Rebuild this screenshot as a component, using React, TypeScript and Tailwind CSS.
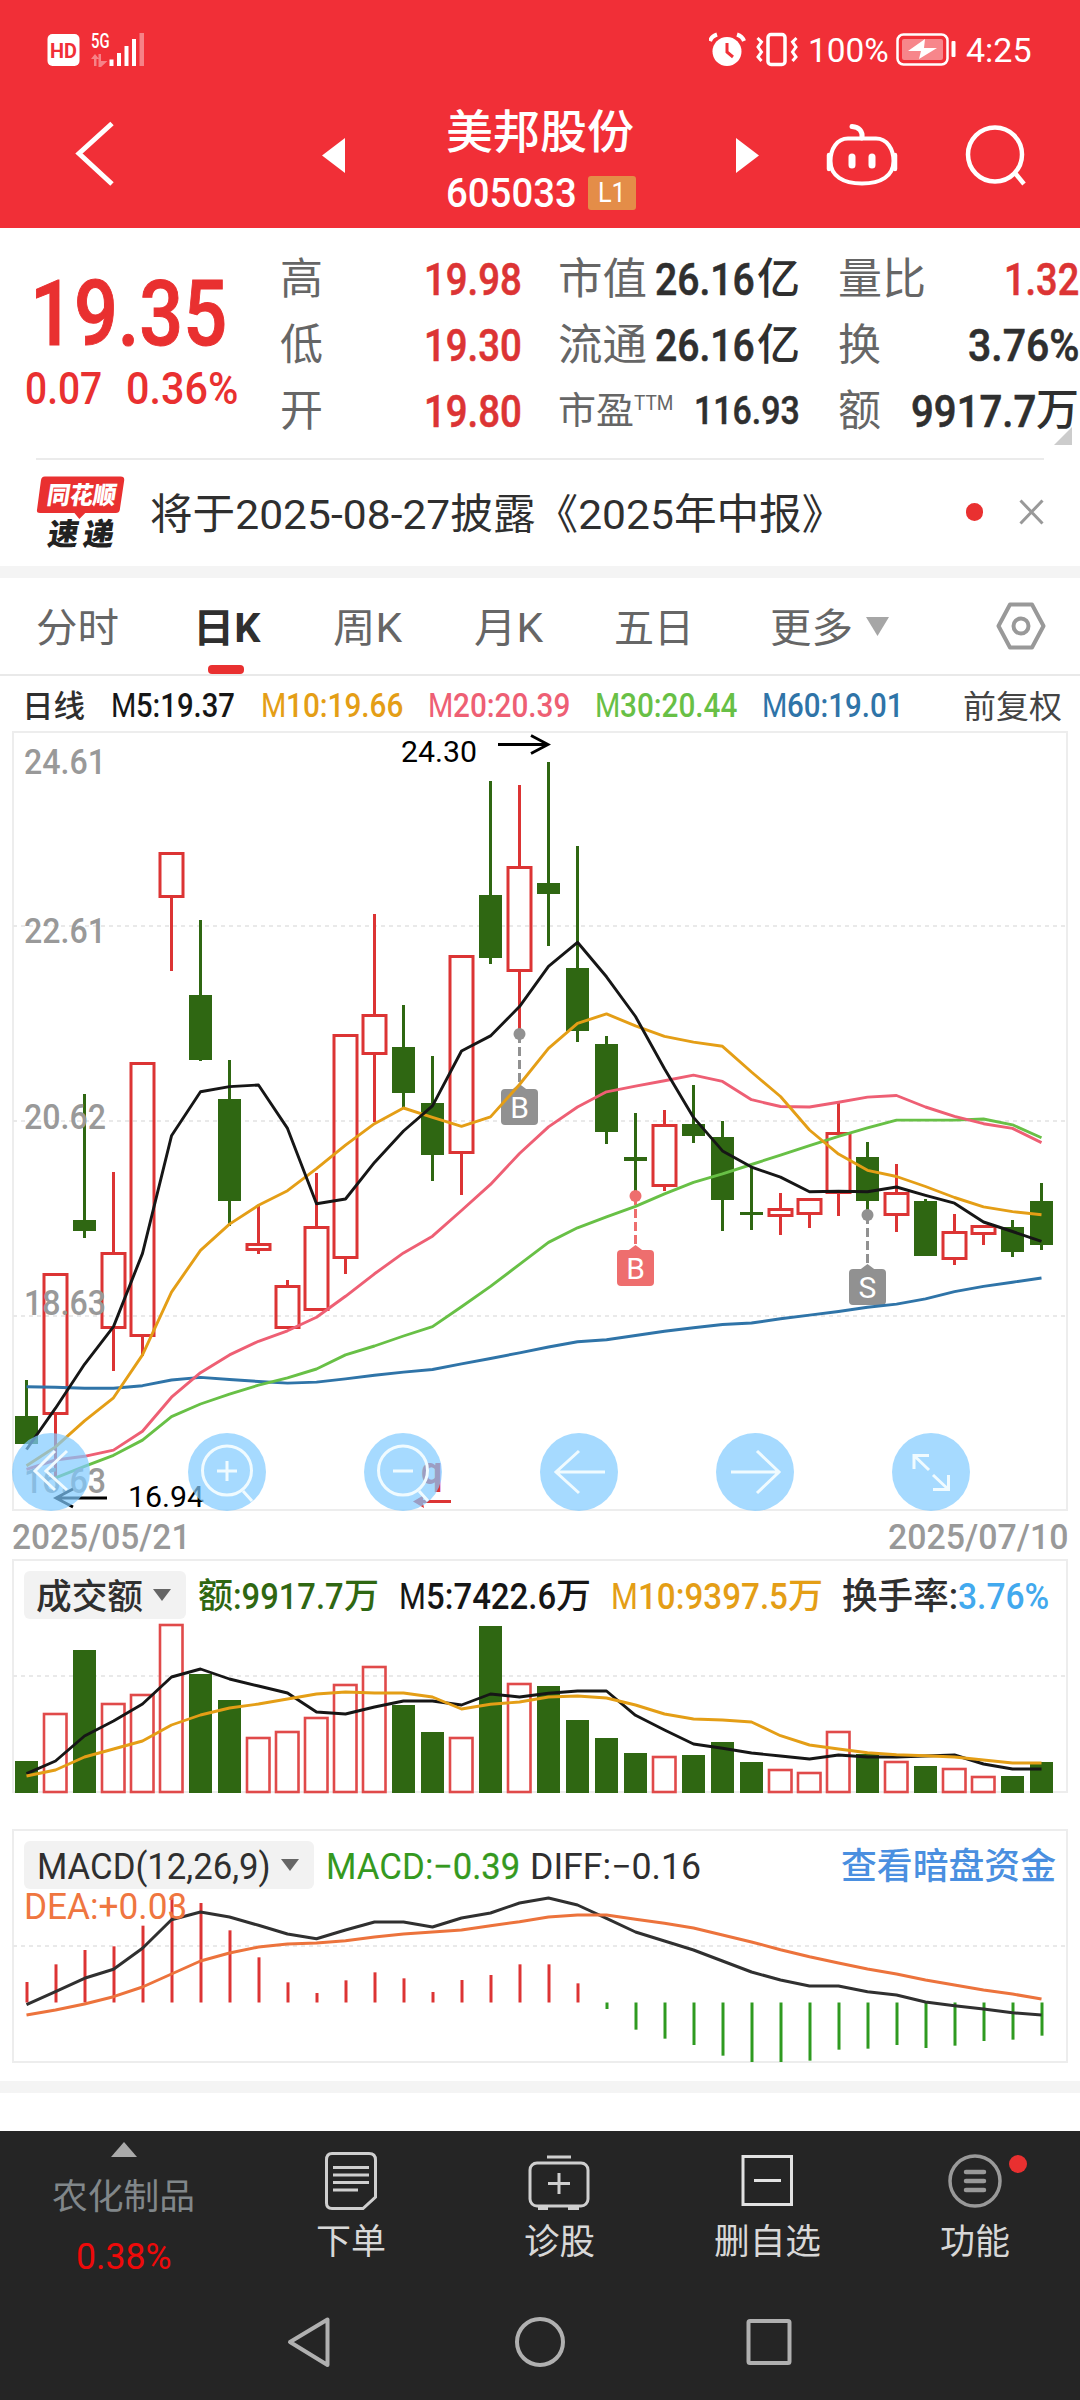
import React, { useLayoutEffect, useRef, useState } from 'react';

/** Single-line text condensed or widened to an exact width. */
function T({ w, dy = 1.5, className = '', children }: { w: number; dy?: number; className?: string; children: React.ReactNode }) {
  const ref = useRef<HTMLSpanElement>(null);
  const [s, setS] = useState(1);
  useLayoutEffect(() => {
    if (ref.current) setS(w / ref.current.offsetWidth);
  }, [w]);
  return (
    <span className={'block shrink-0 leading-none whitespace-nowrap ' + className} style={{ width: w }}>
      <span ref={ref} className="inline-block origin-left" style={{ transform: `translateY(${dy}px) scaleX(${s})` }}>
        {children}
      </span>
    </span>
  );
}

const RED = '#dc3434';
const GREEN = '#2f6712';
const FRAME = '#ededed';
const X0 = 26.5;
const STEP = 29;
const cx = (i: number) => X0 + STEP * i;

const line = (vals: number[], k: number, base: number, start = 0) =>
  vals.map((v, i) => `${cx(i + start)},${(base + v * k).toFixed(1)}`).join(' ');

type Candle = [up: number, high: number, top: number, bottom: number, low: number];
const candles: Candle[] = [
  [0, 1380, 1416, 1444, 1444], [1, 1273, 1273, 1415, 1477], [0, 1094, 1220, 1231, 1238], [1, 1172, 1252, 1329, 1371],
  [1, 1062, 1062, 1337, 1356], [1, 852, 852, 898, 971], [0, 920, 995, 1060, 1061], [0, 1060, 1099, 1201, 1226],
  [1, 1206, 1243, 1251, 1254], [1, 1280, 1285, 1329, 1329], [1, 1173, 1226, 1311, 1311], [1, 1034, 1034, 1259, 1274],
  [1, 914, 1014, 1055, 1122], [0, 1005, 1047, 1093, 1108], [0, 1056, 1103, 1155, 1181], [1, 955, 955, 1154, 1195],
  [0, 781, 895, 958, 964], [1, 785, 866, 972, 1033], [0, 762, 883, 894, 946], [0, 846, 968, 1031, 1042],
  [0, 1036, 1044, 1132, 1144], [0, 1113, 1157, 1161, 1195], [1, 1110, 1124, 1187, 1191], [0, 1085, 1124, 1136, 1143],
  [0, 1121, 1137, 1200, 1231], [0, 1167, 1212, 1215, 1230], [1, 1193, 1208, 1217, 1235], [1, 1198, 1198, 1215, 1228],
  [1, 1103, 1132, 1194, 1216], [0, 1142, 1157, 1201, 1216], [1, 1164, 1192, 1216, 1232], [0, 1199, 1201, 1256, 1256],
  [1, 1214, 1231, 1260, 1265], [1, 1225, 1225, 1235, 1245], [0, 1220, 1227, 1252, 1257], [0, 1183, 1201, 1245, 1250],
];

const ma5 = [1395, 1316, 1232, 1160, 1020, 795, 711, 701, 698, 781, 925, 916, 846, 786, 738, 633, 604, 548, 471, 425, 491, 567, 667, 760, 824, 855, 874, 902, 901, 902, 893, 909, 924, 960, 978, 997];
const ma10 = [1426, 1390, 1340, 1296, 1214, 1094, 1014, 964, 928, 900, 858, 813, 772, 742, 760, 777, 759, 697, 628, 580, 562, 585, 605, 616, 624, 673, 720, 784, 830, 861, 873, 892, 913, 931, 940, 946];
const ma20 = [1433, 1415, 1408, 1396, 1360, 1295, 1248, 1214, 1188, 1168, 1142, 1102, 1059, 1019, 987, 938, 888, 829, 778, 740, 711, 700, 690, 679, 691, 726, 739, 740, 731, 721, 718, 740, 758, 772, 781, 808];
const ma30 = [1449, 1427, 1406, 1377, 1332, 1308, 1289, 1272, 1258, 1241, 1214, 1197, 1178, 1160, 1122, 1083, 1041, 999, 971, 950, 930, 906, 884, 868, 850, 832, 814, 796, 780, 765, 765, 765, 763, 774, 799];
const ma60 = [1275, 1276, 1278, 1278, 1273, 1262, 1257, 1261, 1265, 1268, 1266, 1260, 1253, 1247, 1242, 1231, 1221, 1210, 1199, 1189, 1185, 1177, 1169, 1162, 1156, 1153, 1145, 1138, 1131, 1123, 1117, 1107, 1093, 1083, 1075, 1067];

const volume = [633, 489, 300, 459, 432, 222, 372, 450, 561, 543, 501, 402, 348, 465, 546, 561, 228, 399, 408, 510, 564, 609, 618, 615, 576, 636, 657, 666, 543, 612, 633, 648, 654, 678, 678, 636];
const vol5 = [671, 633, 558, 513, 462, 381, 357, 387, 408, 429, 486, 492, 471, 453, 453, 465, 432, 441, 430, 423, 423, 496, 540, 582, 595, 609, 618, 627, 615, 621, 621, 618, 615, 642, 657, 657];
const vol10 = [678, 660, 621, 597, 573, 525, 495, 474, 462, 447, 432, 426, 429, 429, 441, 477, 463, 456, 441, 438, 444, 465, 492, 507, 510, 516, 557, 585, 597, 608, 614, 617, 621, 630, 639, 639];

const macd = [516, 463, 420, 409, 347, 262, 279, 361, 442, 517, 549, 511, 487, 505, 546, 510, 495, 463, 463, 520, 597, 659, 686, 705, 737, 756, 756, 752, 719, 716, 705, 714, 707, 693, 689, 677];
const diff = [584, 545, 505, 478, 415, 329, 306, 321, 346, 372, 386, 360, 336, 336, 351, 324, 309, 279, 264, 285, 325, 366, 393, 420, 453, 486, 510, 528, 528, 545, 555, 576, 587, 597, 608, 615];
const dea = [615, 600, 582, 560, 531, 492, 453, 429, 411, 402, 399, 392, 381, 372, 366, 360, 347, 335, 321, 315, 315, 328, 340, 354, 375, 396, 419, 440, 459, 477, 492, 510, 525, 540, 552, 567];

const PK = 820 / 1568;

function Mark({ x, y, box, label, color }: { x: number; y: number; box: number; label: string; color: string }) {
  return (
    <g fill={color}>
      <line x1={x} x2={x} y1={y} y2={box - 4} stroke={color} strokeWidth="3" strokeDasharray="9 4" />
      <circle cx={x} cy={y} r="6" />
      <path d={`M${x - 8} ${box + 1}L${x} ${box - 5}L${x + 8} ${box + 1}Z`} />
      <rect x={x - 18.5} y={box} width="37" height="36" rx="4" />
      <text x={x} y={box + 28.5} textAnchor="middle" fontSize="30" fill="#fff">{label}</text>
    </g>
  );
}

function PriceChart() {
  return (
    <svg className="block" width="1080" height="788" viewBox="0 728 1080 788" fontFamily="Roboto, sans-serif">
      <rect x="13" y="732" width="1054" height="778" fill="none" stroke={FRAME} strokeWidth="2" />
      {[926, 1121, 1316].map((y) => (
        <line key={y} x1="13" x2="1067" y1={y} y2={y} stroke="#e9e9e9" strokeWidth="2" strokeDasharray="4 4" />
      ))}
      {candles.map(([up, h, t, b, l], i) =>
        up ? (
          <g key={i} stroke={RED} strokeWidth="3" fill="none">
            {h < t && <line x1={cx(i)} x2={cx(i)} y1={h} y2={t} />}
            {l > b && <line x1={cx(i)} x2={cx(i)} y1={b} y2={l} />}
            <rect x={cx(i) - 11.5} y={t + 1.5} width="23" height={b - t - 3} />
          </g>
        ) : (
          <g key={i} fill={GREEN}>
            <rect x={cx(i) - 1.5} y={h} width="3" height={l - h} />
            <rect x={cx(i) - 11.5} y={t} width="23" height={b - t} />
          </g>
        ),
      )}
      <Mark x={519.5} y={1034} box={1089} label="B" color="#919191" />
      <Mark x={635.5} y={1196} box={1250} label="B" color="#ee6e6e" />
      <Mark x={867.5} y={1215} box={1269} label="S" color="#919191" />
      <g fill="none" strokeWidth="2.9" strokeLinejoin="round">
        <polyline points={line(ma60, PK, 720)} stroke="#2f74a8" />
        <polyline points={line(ma30, PK, 720, 1)} stroke="#68c046" />
        <polyline points={line(ma20, PK, 720)} stroke="#ee5f74" />
        <polyline points={line(ma10, PK, 720)} stroke="#e49e16" />
        <polyline points={line(ma5, PK, 720)} stroke="#161616" />
      </g>
      <g fill="#999" fontSize="35" fontWeight="500">
        {([['24.61', 774], ['22.61', 943], ['20.62', 1129], ['18.63', 1315], ['16.63', 1493]] as [string, number][]).map(([s, y]) => (
          <text key={s} x="24" y={y} textLength="82" lengthAdjust="spacingAndGlyphs">{s}</text>
        ))}
      </g>
      <g fontSize="30" fill="#000">
        <text x="401" y="762" textLength="76" lengthAdjust="spacingAndGlyphs">24.30</text>
        <text x="128" y="1507" textLength="76" lengthAdjust="spacingAndGlyphs">16.94</text>
      </g>
      <g stroke="#000" strokeWidth="2.800" fill="none">
        <path d="M498 744.5H548M531 735.5L548 744.5L531 753.5" />
        <path d="M107 1498H56M73 1489L56 1498L73 1507" />
      </g>
      <g fill={RED}>
        <text x="421" y="1484" fontSize="38" fontWeight="700">q</text>
        <path d="M451 1500V1503H423L424 1508L413 1501.500L424 1495L423 1500Z" />
      </g>
      <g fill="#80caff" fillOpacity="0.7">
        {[51, 227, 403, 579, 755, 931].map((x) => (
          <circle key={x} cx={x} cy="1472" r="39" />
        ))}
      </g>
      <g stroke="#f0fbff" strokeWidth="3" fill="none">
        <path d="M67 1451L46 1471L67 1490M55 1451L35 1471L55 1490" />
        <circle cx="227" cy="1470.500" r="24.500" />
        <path d="M217 1471H237M227 1461V1481M243 1491L252 1501" />
        <circle cx="403" cy="1470.500" r="24.500" />
        <path d="M393 1471H413M419 1491L428 1501" />
        <path d="M605 1472H556M579 1451L556 1472L579 1493" />
        <path d="M731 1472H779M757 1451L779 1472L757 1493" />
        <path d="M929 1455.500H914V1469M914 1455.500L929 1470M933 1475L948.500 1489.500M933 1489.500H948.500V1475" />
      </g>
    </svg>
  );
}

function VolumeChart() {
  return (
    <svg className="block" width="1080" height="240" viewBox="0 1556 1080 240">
      <rect x="13" y="1560" width="1054" height="232" fill="none" stroke={FRAME} strokeWidth="2" />
      <line x1="13" x2="1067" y1="1676" y2="1676" stroke="#e9e9e9" strokeWidth="2" strokeDasharray="4 4" />
      {volume.map((v, i) => {
        const y = 1550 + v / 3;
        return candles[i][0] ? (
          <rect key={i} x={cx(i) - 11.5} y={y + 1} width="22.500" height={1792 - y - 1} fill="none" stroke="#e04a4a" strokeWidth="2.600" />
        ) : (
          <rect key={i} x={cx(i) - 11.5} y={y} width="23" height={1793 - y} fill={GREEN} />
        );
      })}
      <g fill="none" strokeWidth="2.900" strokeLinejoin="round">
        <polyline points={line(vol5, 1 / 3, 1550)} stroke="#161616" />
        <polyline points={line(vol10, 1 / 3, 1550)} stroke="#e49e16" />
      </g>
    </svg>
  );
}

function MacdChart() {
  return (
    <svg className="block" width="1080" height="240" viewBox="0 1826 1080 240">
      <rect x="13" y="1830" width="1054" height="232" fill="none" stroke={FRAME} strokeWidth="2" />
      <line x1="13" x2="1067" y1="1946" y2="1946" stroke="#e9e9e9" strokeWidth="2" strokeDasharray="4 4" />
      {macd.map((v, i) => (
        <line key={i} x1={cx(i) + 0.5} x2={cx(i) + 0.5} y1="2002.500" y2={1810 + v / 3} stroke={v < 577 ? '#dc3434' : '#2f9a20'} strokeWidth="3" />
      ))}
      <g fill="none" strokeWidth="3" strokeLinejoin="round">
        <polyline points={line(diff, 1 / 3, 1810)} stroke="#303030" />
        <polyline points={line(dea, 1 / 3, 1810)} stroke="#ec733c" />
      </g>
    </svg>
  );
}

function Header() {
  return (
    <header className="h-[228px] bg-[#f12f37] text-white">
      <div className="flex h-[100px] items-center pl-[47px] pr-[48px]">
        <svg width="100" height="44" viewBox="47 28 100 44" fill="#fff">
          <rect x="47.500" y="34" width="32" height="32" rx="5" />
          <text x="50" y="58" fontSize="21" fontWeight="700" fill="#f12f37" textLength="27" lengthAdjust="spacingAndGlyphs">HD</text>
          <text x="91" y="47.500" fontSize="20" fontWeight="500" textLength="18.500" lengthAdjust="spacingAndGlyphs">5G</text>
          <g opacity="0.4">
            <path d="M91 59L95 54L99 59H96.500V66H94V59ZM98.500 54H101V61H103.500L107.500 61L101 67H98.500Z" />
            <rect x="139.500" y="33" width="4.500" height="33" />
          </g>
          <rect x="109.500" y="59.500" width="4" height="6.500" />
          <rect x="117" y="53" width="4" height="13" />
          <rect x="124.500" y="46" width="4" height="20" />
          <rect x="132" y="39" width="4" height="27" />
        </svg>
        <svg className="ml-auto" width="92" height="36" viewBox="710 32 92 36" fill="none" stroke="#fff">
          <circle cx="728" cy="51.500" r="14.500" fill="#fff" stroke="none" />
          <path d="M711 41C712 38 715 35.500 718 34.500M745 41C744 38 741 35.500 738 34.500" strokeWidth="4" />
          <path d="M728 43V52L734 57" stroke="#f12f37" strokeWidth="3" />
          <rect x="769" y="34.500" width="17" height="30" rx="3" strokeWidth="3.500" />
          <path d="M758.500 38L762.500 42L759 47L762.500 52L759 57L762.500 61M797.500 38L793.500 42L797 47L793.500 52L797 57L793.500 61" strokeWidth="3" />
        </svg>
        <T w={81} dy={0} className="ml-[7px] text-[33px]">100%</T>
        <svg className="ml-[6px]" width="62" height="36" viewBox="895 32 62 36">
          <rect x="897.500" y="34.500" width="50" height="30" rx="6" fill="none" stroke="#fff" strokeWidth="2.500" />
          <rect x="902" y="39" width="41" height="21" rx="2" fill="#fff" opacity="0.42" />
          <rect x="951.500" y="41" width="4" height="16" rx="1" fill="#fff" />
          <path d="M925 39L908 51H921L919 59L937 48H924Z" fill="#fff" />
        </svg>
        <T w={66} dy={0} className="ml-[9px] text-[34px]">4:25</T>
      </div>
      <div className="flex h-[128px] items-start pl-[74px]">
        <svg className="mt-[20px]" width="42" height="68" viewBox="74 120 42 68" fill="none" stroke="#fff" strokeWidth="5">
          <path d="M112 123.500L79 153.500L112 184" />
        </svg>
        <svg className="ml-[206px] mt-[38px]" width="23" height="35" fill="#fff"><path d="M0 17.500L23 0V35Z" /></svg>
        <div className="ml-[101px] flex w-[192px] flex-col">
          <T w={188} className="mt-[7px] text-[46px] font-medium">美邦股份</T>
          <div className="mt-[19px] flex items-center">
            <T w={131} dy={0.5} className="text-[41px] font-medium">605033</T>
            <div className="ml-[11px] flex h-[34px] w-[48px] items-center justify-center rounded-[3px] bg-[#e48d48]">
              <T w={28} dy={0} className="text-[28px]">L1</T>
            </div>
          </div>
        </div>
        <svg className="ml-[98px] mt-[38px]" width="23" height="35" fill="#fff"><path d="M23 17.500L0 0V35Z" /></svg>
        <svg className="ml-[66px] mt-[20px]" width="74" height="68" viewBox="824 120 74 68" fill="none" stroke="#fff" strokeWidth="4">
          <path d="M847 138.500H875C886 138.500 892.500 149 892.500 161C892.500 176 880 183.500 861 183.500C842 183.500 829.500 176 829.500 161C829.500 149 836 138.500 847 138.500Z" />
          <path d="M861 138C862 131 858 127 851 126.500" strokeWidth="5" strokeLinecap="round" />
          <path d="M828 155V169M894 155V169" strokeWidth="4.500" strokeLinecap="round" />
          <path d="M851 157V165M871 157V165" strokeWidth="7" strokeLinecap="round" />
        </svg>
        <svg className="ml-[66px] mt-[22px]" width="66" height="68" viewBox="964 122 66 68" fill="none" stroke="#fff" strokeWidth="4.500">
          <circle cx="994" cy="154.500" r="27" />
          <path d="M1014 173L1023 184" />
        </svg>
      </div>
    </header>
  );
}

const numRed = 'text-[45px] font-medium text-[#dc3434] [-webkit-text-stroke:0.6px]';
const numDark = 'text-[45px] font-medium text-[#2f2f2f] [-webkit-text-stroke:0.6px]';
const lab = 'text-[43px] text-[#666]';

function Quote() {
  return (
    <section className="flex h-[230px] pt-[16px]">
      <div className="w-[280px] text-[#e93030]">
        <T w={197} className="ml-[30px] mt-[23px] text-[91px] font-medium [-webkit-text-stroke:1px]">19.35</T>
        <div className="mt-[6px] flex">
          <T w={77} className="ml-[25px] text-[45px] font-medium">0.07</T>
          <T w={112} className="ml-[24px] text-[45px] font-medium">0.36%</T>
        </div>
      </div>
      <div className="flex w-[242px] flex-col">
        {[['高', '19.98'], ['低', '19.30'], ['开', '19.80']].map(([k, v]) => (
          <div key={k} className="flex h-[66px] items-center justify-between">
            <T w={43} className={lab}>{k}</T>
            <T w={98} className={numRed}>{v}</T>
          </div>
        ))}
      </div>
      <div className="ml-[36px] flex w-[242px] flex-col">
        {['市值', '流通'].map((k) => (
          <div key={k} className="flex h-[66px] items-center">
            <T w={89} className={lab}>{k}</T>
            <T w={100} className={'ml-[8px] ' + numDark}>26.16</T>
            <T w={43} className="ml-[2px] text-[43px] font-medium text-[#2f2f2f]">亿</T>
          </div>
        ))}
        <div className="flex h-[66px] items-center">
          <T w={76} className="text-[37px] text-[#666]">市盈</T>
          <T w={39} className="-mt-[17px] text-[20px] text-[#666]">TTM</T>
          <T w={106} className="ml-[21px] text-[39px] font-medium text-[#2f2f2f] [-webkit-text-stroke:0.5px]">116.93</T>
        </div>
      </div>
      <div className="relative ml-[38px] flex w-[241px] flex-col">
        <div className="flex h-[66px] items-center justify-between">
          <T w={88} className={lab}>量比</T>
          <T w={75} className={numRed}>1.32</T>
        </div>
        <div className="flex h-[66px] items-center justify-between">
          <T w={43} className={lab}>换</T>
          <T w={111} className={numDark}>3.76%</T>
        </div>
        <div className="flex h-[66px] items-center justify-between">
          <T w={43} className={lab}>额</T>
          <div className="flex">
            <T w={125} className={numDark}>9917.7</T>
            <T w={43} className="text-[43px] font-medium text-[#2f2f2f]">万</T>
          </div>
        </div>
        <svg className="absolute left-[216px] top-[183px]" width="18" height="18" fill="#ccc"><path d="M18 0V18H0Z" /></svg>
      </div>
    </section>
  );
}

function News() {
  return (
    <section className="mx-[36px] flex h-[108px] items-start border-t-2 border-[#ebebeb]">
      <svg className="mt-[14px]" width="92" height="82" viewBox="36 474 92 82">
        <path d="M45 476H122Q126 476 125.500 480L121 510Q120.500 513 117 513H86L80 519L75 513H40Q36.500 513 37 510L41 480Q41.500 476 45 476Z" fill="#e93030" />
        <g transform="skewX(-9)" fontFamily="'Noto Sans CJK SC', sans-serif" fontWeight="900">
          <text x="126" y="504" fontSize="25" fill="#fff" textLength="70" lengthAdjust="spacingAndGlyphs">同花顺</text>
          <text x="133" y="545" fontSize="31" fill="#222" textLength="67">速递</text>
        </g>
      </svg>
      <T w={694} className="ml-[23px] mt-[32px] text-[41.500px] text-[#2f2f2f]">将于2025-08-27披露《2025年中报》</T>
      <div className="ml-[122px] mt-[43px] size-[18px] rounded-full bg-[#e93030]" />
      <svg className="ml-[36px] mt-[39px]" width="25" height="26" stroke="#999" strokeWidth="3"><path d="M1.500 1.500L23.500 24.500M23.500 1.500L1.500 24.500" /></svg>
    </section>
  );
}

function Tabs() {
  return (
    <nav className="flex h-[98px] items-center border-b-2 border-[#e9e9e9] pl-[36px] text-[40px] text-[#666]">
      <T w={83} dy={3}>分时</T>
      <div className="relative ml-[74px]">
        <T w={67} dy={3} className="font-bold text-[#2f2f2f]">日K</T>
        <div className="absolute left-[15px] top-[59px] h-[9px] w-[36px] rounded-[4px] bg-[#e93030]" />
      </div>
      <T w={69} dy={3} className="ml-[73px]">周K</T>
      <T w={69} dy={3} className="ml-[72px]">月K</T>
      <T w={80} dy={3} className="ml-[71px]">五日</T>
      <T w={83} dy={3} className="ml-[76px]">更多</T>
      <svg className="ml-[13px]" width="23" height="19" fill="#a6a6a6"><path d="M0 0H23L11.500 19Z" /></svg>
      <svg className="ml-[107px]" width="50" height="48" fill="none" stroke="#999" strokeWidth="4">
        <path d="M14 2.500H36L47.500 24L36 45.500H14L2.500 24Z" strokeLinejoin="round" />
        <circle cx="25" cy="24" r="7.500" />
      </svg>
    </nav>
  );
}

const avgs = [
  { m: '5:19.37', w: 99, c: 'ml-[26px] text-[#161616]' },
  { m: '10:19.66', w: 117, c: 'ml-[26px] text-[#e49e16]' },
  { m: '20:20.39', w: 117, c: 'ml-[25px] text-[#ee5f74]' },
  { m: '30:20.44', w: 117, c: 'ml-[25px] text-[#68c046]' },
  { m: '60:19.01', w: 116, c: 'ml-[25px] text-[#2f74a8]' },
];

function Legend() {
  return (
    <div className="flex h-[52px] items-center pl-[22px] pt-[5px] text-[32.500px]">
      <T w={63} className="text-[31px] font-medium text-[#2f2f2f]">日线</T>
      {avgs.map((a) => (
        <div key={a.m} className={'flex ' + a.c}>
          <T w={25}>M</T>
          <T w={a.w} className="font-medium">{a.m}</T>
        </div>
      ))}
      <T w={99} className="ml-auto mr-[18px] text-[32px] text-[#444]">前复权</T>
    </div>
  );
}

const Caret = () => (
  <svg width="18" height="12" fill="#666"><path d="M0 0H18L9 12Z" /></svg>
);

function Volume() {
  return (
    <section className="relative">
      <VolumeChart />
      <div className="absolute left-0 top-[15px] flex h-[48px] items-center pl-[24px] text-[36.500px] font-medium">
        <div className="flex h-[48px] w-[162px] items-center rounded-[6px] bg-[#f2f2f2] pl-[12px] text-[#2f2f2f]">
          <T w={107} className="text-[35px]">成交额</T>
          <div className="ml-[10px]"><Caret /></div>
        </div>
        <div className="ml-[12px] flex text-[#2f6712]">
          <T w={35} className="text-[35px]">额</T>
          <T w={111}>:9917.7</T>
          <T w={35} className="text-[35px]">万</T>
        </div>
        <div className="ml-[20px] flex text-[#161616]">
          <T w={27} className="font-normal">M</T>
          <T w={130}>5:7422.6</T>
          <T w={35} className="text-[35px]">万</T>
        </div>
        <div className="ml-[20px] flex text-[#e49e16]">
          <T w={27} className="font-normal">M</T>
          <T w={150}>10:9397.5</T>
          <T w={35} className="text-[35px]">万</T>
        </div>
        <T w={116} className="ml-[19px] text-[#2f2f2f]">换手率:</T>
        <T w={91} className="text-[#42a9ee]">3.76%</T>
      </div>
    </section>
  );
}

function Macd() {
  return (
    <section className="relative mt-[30px]">
      <MacdChart />
      <div className="absolute left-0 top-[15px] flex h-[48px] w-full items-center pl-[24px] text-[36.500px]">
        <div className="flex h-[48px] w-[290px] items-center rounded-[6px] bg-[#f2f2f2] pl-[13px] text-[#2f2f2f]">
          <T w={234}>MACD(12,26,9)</T>
          <div className="ml-[10px]"><Caret /></div>
        </div>
        <T w={107} className="ml-[12px] text-[#35991f]">MACD:</T>
        <T w={87} className="text-[#35991f] [-webkit-text-stroke:0.3px]">−0.39</T>
        <T w={171} className="ml-[10px] text-[#2f2f2f]">DIFF:−0.16</T>
        <T w={215} className="ml-auto mr-[24px] text-[36px] font-medium text-[#4a8fe0]">查看暗盘资金</T>
      </div>
      <div className="absolute left-[24px] top-[61px] text-[36.500px] text-[#ef7640]">
        <T w={163}>DEA:+0.03</T>
      </div>
    </section>
  );
}

function BottomBar() {
  return (
    <footer className="mt-[38px] h-[269px] bg-[#252525] text-[#d8d8d8]">
      <div className="flex h-[150px] items-start text-[35px]">
        <div className="flex w-[247px] flex-col items-center">
          <svg className="mt-[11px]" width="26" height="15" fill="#aaa"><path d="M13 0L26 15H0Z" /></svg>
          <T w={143} className="mt-[21px] text-[35.500px] text-[#81878a]">农化制品</T>
          <T w={96} className="mt-[23px] text-[36px] text-[#ee0a0a]">0.38%</T>
        </div>
        <div className="flex w-[208px] flex-col items-center">
          <svg className="mt-[20px]" width="54" height="60" viewBox="325 2151 54 60" fill="none" stroke="#cfcfcf" strokeWidth="3">
            <path d="M333 2153.500H370Q376.500 2153.500 376.500 2160V2197L364 2208.500H333Q327.500 2208.500 327.500 2203V2160Q327.500 2153.500 333 2153.500Z" />
            <path d="M334 2167.500H370M334 2175H370M334 2182.500H370M334 2190H359" />
          </svg>
          <T w={70} className="mt-[12px]">下单</T>
        </div>
        <div className="flex w-[208px] flex-col items-center">
          <svg className="mt-[20px]" width="62" height="60" viewBox="529 2151 62 60" fill="none" stroke="#cfcfcf" strokeWidth="3">
            <rect x="531" y="2163" width="58" height="43" rx="7" />
            <path d="M548 2157H572M560 2173V2194M549 2183.500H571M539 2208.500H549M569 2208.500H580" />
          </svg>
          <T w={71} className="mt-[12px]">诊股</T>
        </div>
        <div className="flex w-[208px] flex-col items-center">
          <svg className="mt-[20px]" width="54" height="60" viewBox="740 2151 54 60" fill="none" stroke="#e2e2e2" strokeWidth="3">
            <rect x="743" y="2156.500" width="48.500" height="48" />
            <path d="M754 2180.500H781" />
          </svg>
          <T w={107} className="mt-[12px]">删自选</T>
        </div>
        <div className="relative flex w-[208px] flex-col items-center">
          <svg className="mt-[20px]" width="56" height="60" viewBox="948 2151 56 60" fill="none" stroke="#999" strokeWidth="3.500">
            <circle cx="976" cy="2181" r="25" />
            <path d="M967 2172H985M967 2181H985M967 2190H985" strokeWidth="4.500" strokeLinecap="round" />
          </svg>
          <div className="absolute left-[138px] top-[24px] size-[18px] rounded-full bg-[#e93030]" />
          <T w={70} className="mt-[12px]">功能</T>
        </div>
      </div>
      <div className="flex h-[119px] pl-[285px] pt-[34px]">
        <svg width="48" height="54" viewBox="285 2315 48 54" fill="none" stroke="#b0b0b0" strokeWidth="4" strokeLinejoin="round">
          <path d="M327.500 2319.500V2365L290 2342Z" />
        </svg>
        <svg className="ml-[180px]" width="54" height="54" viewBox="513 2315 54 54" fill="none" stroke="#b0b0b0" strokeWidth="4">
          <circle cx="540" cy="2342" r="23" />
        </svg>
        <svg className="ml-[178px]" width="48" height="54" viewBox="745 2315 48 54" fill="none" stroke="#b0b0b0" strokeWidth="4">
          <rect x="748.500" y="2321" width="41" height="42" rx="1.500" />
        </svg>
      </div>
    </footer>
  );
}

export default function App() {
  return (
    <div className="h-[2400px] w-[1080px] overflow-hidden bg-white font-['Roboto','Noto_Sans_CJK_SC',sans-serif]">
      <Header />
      <Quote />
      <News />
      <div className="h-[12px] bg-[#f4f4f4]" />
      <Tabs />
      <Legend />
      <PriceChart />
      <div className="flex h-[40px] items-center justify-between pl-[12px] pr-[12px] text-[35px] font-medium text-[#999]">
        <T w={178} dy={0.5}>2025/05/21</T>
        <T w={180} dy={0.5}>2025/07/10</T>
      </div>
      <Volume />
      <Macd />
      <div className="mt-[15px] h-[12px] bg-[#f4f4f4]" />
      <BottomBar />
    </div>
  );
}
